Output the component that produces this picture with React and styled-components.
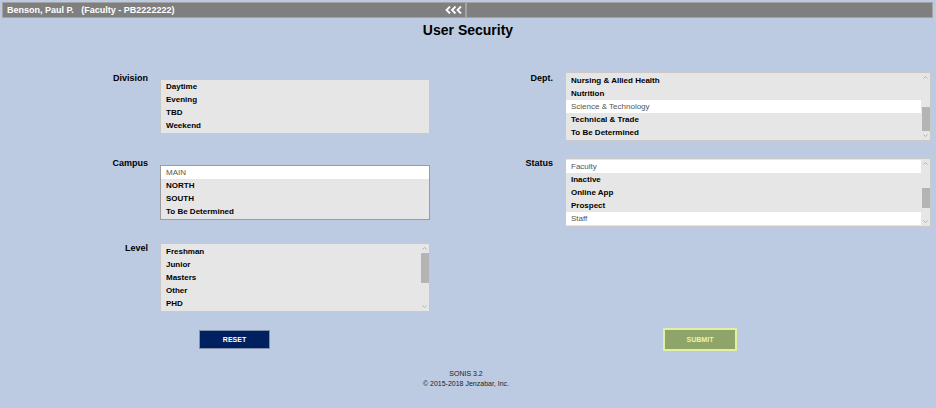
import styled, { createGlobalStyle } from 'styled-components';

const GlobalStyle = createGlobalStyle`
  html, body {
    margin: 0;
    padding: 0;
    background: #bccbe2;
  }
  body {
    font-family: "Liberation Sans", Arial, sans-serif;
  }
`;

const Page = styled.div`
  width: 936px;
  height: 408px;
  background: #bccbe2;
  overflow: hidden;
`;

const TopBar = styled.div`
  display: flex;
  height: 16px;
  margin: 2px 3px 0 2px;
`;

const BarPanel = styled.div`
  flex: ${(p) => (p.$grow ? '1' : 'none')};
  width: ${(p) => (p.$width ? `${p.$width}px` : 'auto')};
  box-sizing: border-box;
  display: flex;
  align-items: center;
  justify-content: space-between;
  padding: 0 2px 0 4px;
  background: #7f7f7f;
  border: 1px solid #a3a3a3;
  color: #fff;
  font-size: 9px;
  font-weight: bold;
  white-space: pre;
`;

const Title = styled.h1`
  margin: 4px 0 0;
  text-align: center;
  font-size: 14px;
  line-height: 16px;
  font-weight: bold;
  color: #000;
`;

const Form = styled.div`
  display: grid;
  grid-template-columns: 330px 426px;
  column-gap: 75px;
  align-items: start;
  margin-top: 34px;
  padding-left: 100px;
`;

const Column = styled.div`
  display: flex;
  flex-direction: column;
`;

const Field = styled.div`
  display: flex;
  align-items: flex-start;
  margin-top: ${(p) => p.$top || 0}px;
`;

const Label = styled.div`
  width: 48px;
  margin-right: 12px;
  text-align: right;
  font-size: 9px;
  line-height: 12px;
  font-weight: bold;
  color: #000;
`;

const ListBox = styled.div`
  display: flex;
  box-sizing: border-box;
  width: ${(p) => p.$width}px;
  margin-top: ${(p) => p.$offset || 0}px;
  background: #e6e6e6;
  border: 1px solid ${(p) => (p.$focus ? '#9c9c9c' : '#c9c9c9')};
`;

const Options = styled.div`
  flex: 1;
  padding: ${(p) => (p.$tight ? '0 0 1px' : '1px 0')};
`;

const Option = styled.div`
  height: 13px;
  line-height: 13px;
  padding-left: 5px;
  font-size: 8px;
  font-weight: ${(p) => (p.$selected ? 'normal' : 'bold')};
  color: ${(p) => (p.$selected ? '#555' : '#000')};
  background: ${(p) => (p.$selected ? '#fff' : 'transparent')};
  white-space: nowrap;
`;

const Scrollbar = styled.div`
  width: 9px;
  display: flex;
  flex-direction: column;
  align-items: center;
`;

const ArrowBox = styled.svg`
  flex: none;
  width: 9px;
  height: 9px;
`;

const Thumb = styled.div`
  flex: none;
  width: 8px;
  margin-top: ${(p) => p.$offset}px;
  height: ${(p) => p.$size}px;
  background: #b4b4b4;
`;

const Track = styled.div`
  flex: 1;
`;

const Actions = styled.div`
  display: flex;
  align-items: center;
  margin-top: 16px;
  padding-left: 199px;
`;

const Button = styled.button`
  box-sizing: border-box;
  margin: 0;
  padding: 0;
  font-family: "Liberation Sans", Arial, sans-serif;
  font-size: 7px;
  font-weight: bold;
  cursor: pointer;
`;

const ResetButton = styled(Button)`
  width: 71px;
  height: 19px;
  background: #002060;
  color: #fff;
  border: 1px solid #8190ad;
`;

const SubmitButton = styled(Button)`
  width: 74px;
  height: 23px;
  margin-left: 393px;
  background: #8fa468;
  color: #eef5a4;
  border: 2px solid #e2f0a2;
`;

const Footer = styled.div`
  margin-top: 18px;
  padding-right: 4px;
  text-align: center;
  font-size: 7px;
  line-height: 9.5px;
  color: #222;
`;

const Chevrons = () => (
  <svg width="18" height="8" viewBox="0 0 18 8">
    <g fill="none" stroke="#fff" strokeWidth="1.8" strokeLinejoin="miter">
      <path d="M5 0.5 L1.5 4 L5 7.5" />
      <path d="M10.5 0.5 L7 4 L10.5 7.5" />
      <path d="M16 0.5 L12.5 4 L16 7.5" />
    </g>
  </svg>
);

const Arrow = ({ down }) => (
  <ArrowBox viewBox="0 0 9 9">
    <path
      d={down ? 'M2.5 3.5 L4.5 5.5 L6.5 3.5' : 'M2.5 5.5 L4.5 3.5 L6.5 5.5'}
      fill="none"
      stroke="#a5a5a5"
      strokeWidth="0.8"
    />
  </ArrowBox>
);

const List = ({ width, offset, focus, items, scroll }) => (
  <ListBox $width={width} $offset={offset} $focus={focus}>
    <Options $tight={items.length < 5}>
      {items.map((it) => (
        <Option key={it.label} $selected={it.selected}>
          {it.label}
        </Option>
      ))}
    </Options>
    {scroll && (
      <Scrollbar>
        <Arrow />
        <Thumb $offset={scroll.offset} $size={scroll.size} />
        <Track />
        <Arrow down />
      </Scrollbar>
    )}
  </ListBox>
);

const opts = (labels, selected = []) =>
  labels.map((label) => ({ label, selected: selected.includes(label) }));

export default function App() {
  return (
    <Page>
      <GlobalStyle />
      <TopBar>
        <BarPanel $width={464}>
          <span>{'Benson, Paul P.\u00a0\u00a0\u00a0(Faculty - PB2222222)'}</span>
          <Chevrons />
        </BarPanel>
        <BarPanel $grow />
      </TopBar>

      <Title>User Security</Title>

      <Form>
        <Column>
          <Field>
            <Label>Division</Label>
            <List width={270} offset={7} items={opts(['Daytime', 'Evening', 'TBD', 'Weekend'])} />
          </Field>
          <Field $top={23}>
            <Label>Campus</Label>
            <List
              width={270}
              offset={8}
              focus
              items={opts(['MAIN', 'NORTH', 'SOUTH', 'To Be Determined'], ['MAIN'])}
            />
          </Field>
          <Field $top={22}>
            <Label>Level</Label>
            <List
              width={270}
              offset={1}
              items={opts(['Freshman', 'Junior', 'Masters', 'Other', 'PHD'])}
              scroll={{ offset: 0, size: 30 }}
            />
          </Field>
        </Column>

        <Column>
          <Field>
            <Label>Dept.</Label>
            <List
              width={366}
              items={opts(
                ['Nursing & Allied Health', 'Nutrition', 'Science & Technology', 'Technical & Trade', 'To Be Determined'],
                ['Science & Technology']
              )}
              scroll={{ offset: 25, size: 24 }}
            />
          </Field>
          <Field $top={16}>
            <Label>Status</Label>
            <List
              width={366}
              offset={1}
              items={opts(['Faculty', 'Inactive', 'Online App', 'Prospect', 'Staff'], ['Faculty', 'Staff'])}
              scroll={{ offset: 20, size: 20 }}
            />
          </Field>
        </Column>
      </Form>

      <Actions>
        <ResetButton>RESET</ResetButton>
        <SubmitButton>SUBMIT</SubmitButton>
      </Actions>

      <Footer>
        <div>SONIS 3.2</div>
        <div>© 2015-2018 Jenzabar, Inc.</div>
      </Footer>
    </Page>
  );
}
